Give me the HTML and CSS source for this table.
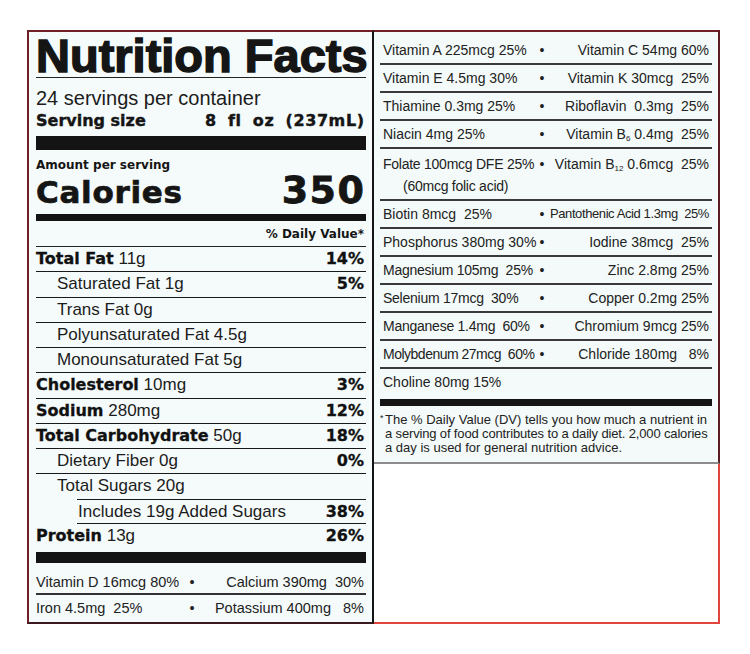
FILE: index.html
```html
<!DOCTYPE html>
<html lang="en">
<head>
<meta charset="utf-8">
<title>Nutrition Facts</title>
<link rel="stylesheet" href="styles.css">
</head>
<body>
<div class="label">
  <section class="main">
    <h1 class="title">Nutrition Facts</h1>
    <p class="servings">24 servings per container</p>
    <p class="serving-size"><span>Serving size</span><span class="ss-val">8 fl oz (237mL)</span></p>
    <div class="bar bar-thick"></div>
    <p class="amount">Amount per serving</p>
    <div class="calories"><span class="cal-label">Calories</span><span class="cal-num">350</span></div>
    <div class="bar bar-mid"></div>
    <p class="dv-head">% Daily Value*</p>
    <div class="rows">
      <div class="row"><span><b>Total Fat</b> 11g</span><b>14%</b></div>
      <div class="row sub"><span>Saturated Fat 1g</span><b>5%</b></div>
      <div class="row sub"><span>Trans Fat 0g</span></div>
      <div class="row sub"><span>Polyunsaturated Fat 4.5g</span></div>
      <div class="row sub"><span>Monounsaturated Fat 5g</span></div>
      <div class="row"><span><b>Cholesterol</b> 10mg</span><b>3%</b></div>
      <div class="row"><span><b>Sodium</b> 280mg</span><b>12%</b></div>
      <div class="row"><span><b>Total Carbohydrate</b> 50g</span><b>18%</b></div>
      <div class="row sub"><span>Dietary Fiber 0g</span><b>0%</b></div>
      <div class="row sub no-line"><span>Total Sugars 20g</span></div>
      <div class="row added"><span>Includes 19g Added Sugars</span><b>38%</b></div>
      <div class="row last"><span><b>Protein</b> 13g</span><b>26%</b></div>
    </div>
    <div class="bar bar-bottom"></div>
    <div class="mini-row first"><span>Vitamin D 16mcg 80%</span><span class="dot">•</span><span class="r">Calcium 390mg&nbsp; 30%</span></div>
    <div class="mini-row"><span>Iron 4.5mg&nbsp; 25%</span><span class="dot">•</span><span class="r">Potassium 400mg&nbsp;&nbsp; 8%</span></div>
  </section>
  <div class="side">
    <section class="vitamins">
      <div class="vrow"><span>Vitamin A 225mcg 25%</span><span class="dot">•</span><span class="r">Vitamin C 54mg 60%</span></div>
      <div class="vrow"><span>Vitamin E 4.5mg 30%</span><span class="dot">•</span><span class="r">Vitamin K 30mcg&nbsp; 25%</span></div>
      <div class="vrow"><span>Thiamine 0.3mg 25%</span><span class="dot">•</span><span class="r">Riboflavin&nbsp; 0.3mg&nbsp; 25%</span></div>
      <div class="vrow"><span>Niacin 4mg 25%</span><span class="dot">•</span><span class="r">Vitamin B<sub>6</sub> 0.4mg&nbsp; 25%</span></div>
      <div class="vrow tall"><span class="tight">Folate 100mcg DFE 25%<span class="folic">(60mcg folic acid)</span></span><span class="dot">•</span><span class="r">Vitamin B<sub>12</sub> 0.6mcg&nbsp; 25%</span></div>
      <div class="vrow"><span>Biotin 8mcg&nbsp; 25%</span><span class="dot">•</span><span class="r narrow">Pantothenic Acid 1.3mg&nbsp; 25%</span></div>
      <div class="vrow"><span>Phosphorus 380mg 30%</span><span class="dot">•</span><span class="r">Iodine 38mcg&nbsp; 25%</span></div>
      <div class="vrow"><span class="tight">Magnesium 105mg&nbsp; 25%</span><span class="dot">•</span><span class="r">Zinc 2.8mg 25%</span></div>
      <div class="vrow"><span class="tight">Selenium 17mcg&nbsp; 30%</span><span class="dot">•</span><span class="r">Copper 0.2mg 25%</span></div>
      <div class="vrow"><span class="tight">Manganese 1.4mg&nbsp; 60%</span><span class="dot">•</span><span class="r">Chromium 9mcg 25%</span></div>
      <div class="vrow"><span class="tighter">Molybdenum 27mcg&nbsp; 60%</span><span class="dot">•</span><span class="r">Chloride 180mg&nbsp;&nbsp; 8%</span></div>
      <div class="vrow last"><span>Choline 80mg 15%</span></div>
      <div class="bar vbar"></div>
      <p class="foot"><span class="ast">*</span>The % Daily Value (DV) tells you how much a nutrient in<br><span class="foot-2">a serving of food contributes to a daily diet. 2,000 calories</span><br>a day is used for general nutrition advice.</p>
    </section>
    <div class="blank"></div>
  </div>
</div>
</body>
</html>
```

FILE: styles.css
```css
html, body {
  margin: 0;
  padding: 0;
  background: #ffffff;
}

.label {
  display: flex;
  margin: 30px 0 0 27px;
  width: 693px;
  height: 594px;
}

/* ---------- left panel ---------- */
.main {
  box-sizing: border-box;
  width: 347px;
  height: 594px;
  background: #f5fbfb;
  border-top: 2px solid #6e2026;
  border-left: 2px solid #6e2026;
  border-bottom: 2px solid #3a1a1e;
  border-right: 2px solid #141414;
  padding: 0 6px 0 7px;
  display: flex;
  flex-direction: column;
  color: #151515;
  font-family: "Liberation Sans", Arial, sans-serif;
}

.main p {
  margin: 0;
}

.title {
  margin: 0;
  padding-top: 2px;
  font: bold 47px/43px "Liberation Sans", Arial, sans-serif;
  -webkit-text-stroke: 1.5px #151515;
  white-space: nowrap;
  border-bottom: 1px solid #222;
}

.servings {
  margin-top: 9px !important;
  font-size: 20px;
  line-height: 23px;
  color: #1c1c1c;
}

.serving-size {
  display: flex;
  justify-content: space-between;
  padding-right: 2px;
  font: bold 16px/22px "DejaVu Sans", sans-serif;
  -webkit-text-stroke: 0.4px #151515;
  white-space: nowrap;
}

.ss-val {
  letter-spacing: 0.6px;
  word-spacing: 5px;
  margin-right: -0.6px;
}

.bar {
  background: #141414;
  flex: none;
}

.bar-thick {
  height: 14px;
  margin-top: 4px;
}

.amount {
  margin-top: 8px !important;
  font: bold 12px/14px "DejaVu Sans", sans-serif;
}

.calories {
  display: flex;
  justify-content: space-between;
  align-items: baseline;
  margin-top: 2px;
  padding-right: 2px;
  font-family: "DejaVu Sans", sans-serif;
  font-weight: bold;
}

.cal-label {
  font-size: 31px;
  line-height: 32px;
  letter-spacing: 0.7px;
  -webkit-text-stroke: 0.7px #151515;
}

.cal-num {
  font-size: 38px;
  line-height: 32px;
  letter-spacing: 1.5px;
  margin-right: -1.5px;
  -webkit-text-stroke: 0.8px #151515;
}

.bar-mid {
  height: 7px;
  margin-top: 6px;
}

.dv-head {
  text-align: right;
  padding: 6px 2px 5px 0;
  font: bold 12px/14px "DejaVu Sans", sans-serif;
  border-bottom: 1px solid #222;
}

.rows {
  display: flex;
  flex-direction: column;
}

.row {
  box-sizing: border-box;
  height: 25.27px;
  display: flex;
  justify-content: space-between;
  padding-right: 2px;
  border-bottom: 1px solid #1a1a1a;
  font-size: 17px;
  line-height: 24px;
  color: #1c1c1c;
  white-space: nowrap;
}

.row b {
  font-family: "DejaVu Sans", sans-serif;
  font-size: 16px;
  font-weight: bold;
  color: #111;
  -webkit-text-stroke: 0.3px #111;
}

.row.sub {
  padding-left: 21px;
}

.row.no-line {
  border-bottom: 0;
  height: 24.27px;
}

.row.added {
  margin-left: 41px;
  padding-left: 1px;
  border-top: 1px solid #1a1a1a;
}

.row.last {
  border-bottom: 0;
}

.bar-bottom {
  height: 11px;
  margin-top: 2.4px;
}

.mini-row {
  display: grid;
  grid-template-columns: 149px 14px 1fr;
  font-size: 14.5px;
  line-height: 26px;
  color: #222;
  white-space: nowrap;
  padding-right: 2px;
}

.mini-row.first {
  line-height: 22px;
  padding-top: 8px;
  border-bottom: 2px solid #333;
}

.dot {
  text-align: center;
}

.r {
  text-align: right;
}

/* ---------- right side ---------- */
.side {
  width: 346px;
  display: flex;
  flex-direction: column;
}

.vitamins {
  background: #f3faf9;
  border-top: 2px solid #6e2026;
  border-right: 2px solid #5a1c22;
  border-bottom: 2px solid #8c8c8c;
  padding: 5px 6px 7px;
  font-family: "Liberation Sans", Arial, sans-serif;
  color: #222;
}

.vrow {
  box-sizing: border-box;
  height: 28px;
  display: grid;
  grid-template-columns: 152px 14px 1fr;
  padding: 0 3px;
  border-bottom: 2px solid #3a3a3a;
  font-size: 14px;
  line-height: 26px;
  white-space: nowrap;
}

.vrow.tall {
  height: 52px;
  line-height: 22px;
  padding-top: 4px;
  padding-bottom: 2px;
}

.vrow.last {
  border-bottom: 0;
}

.vrow sub {
  font-size: 8px;
  line-height: 0;
  vertical-align: -2px;
}

.folic {
  display: block;
  padding-left: 20px;
}

.tight {
  letter-spacing: -0.25px;
}

.tighter {
  letter-spacing: -0.5px;
}

.narrow {
  font-size: 13px;
  letter-spacing: -0.4px;
}

.vbar {
  height: 7px;
  margin-top: 2px;
}

.foot {
  margin: 7px 0 0;
  padding-left: 5px;
  font-size: 13px;
  line-height: 14px;
  color: #222;
  white-space: nowrap;
}

.foot-2 {
  letter-spacing: -0.15px;
}

.ast {
  display: inline-block;
  width: 5px;
  margin-left: -5px;
  font-size: 9px;
  vertical-align: top;
  line-height: 10px;
}

.blank {
  flex: 1;
  background: #ffffff;
  border-right: 2px solid #e2453c;
  border-bottom: 2px solid #e2453c;
}
```
